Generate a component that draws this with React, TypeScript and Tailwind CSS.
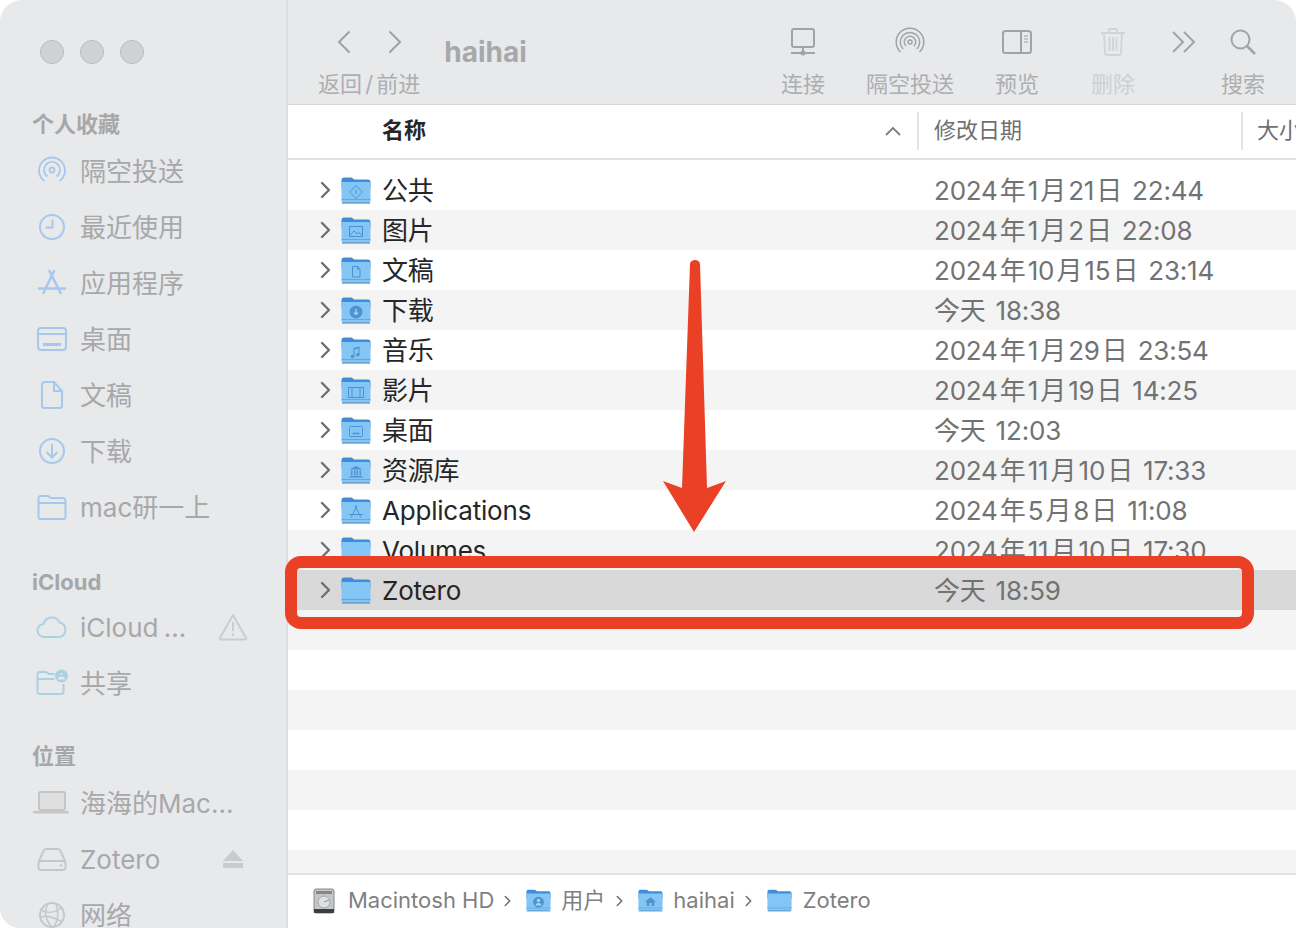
import React from 'react';

const fontStack = "font-['Inter','Noto_Sans_CJK_SC',sans-serif]";

type Glyph = 'public' | 'pictures' | 'doc' | 'download' | 'music' | 'movie' | 'desktop' | 'library' | 'apps' | 'user' | 'home' | 'none';

const FolderGlyph: React.FC<{ glyph: Glyph }> = ({ glyph }) => {
    const s = { stroke: '#4d93cf', strokeWidth: 1, fill: 'none' };
    switch (glyph) {
        case 'public':
            return <g {...s}><path d="M15 8.500l6.500 6.500-6.500 6.500-6.500-6.500z" /><path d="M16 13l-2 2 2 2" /></g>;
        case 'pictures':
            return <g {...s}><rect x="8.500" y="9.500" width="13" height="10" /><path d="M9 18l4-4 3 3 2-1.500 3 2.500" /></g>;
        case 'doc':
            return <g {...s}><path d="M11.500 9.500h5l2.500 2.500v8h-7.500z" /><path d="M16.500 9.500v2.500h2.500" /></g>;
        case 'download':
            return <g><circle cx="15" cy="15" r="6.500" fill="#4d93cf" /><path d="M15 12v5M13 15.500l2 2 2-2" stroke="#a8d8f8" strokeWidth="1.200" fill="none" /></g>;
        case 'music':
            return <g fill="#4d93cf"><path d="M12.500 11l6-1.500v8h-1V11.500l-4 1v7h-1z" /><circle cx="11.500" cy="19.500" r="1.700" /><circle cx="16.800" cy="17.800" r="1.700" /></g>;
        case 'movie':
            return <g {...s}><rect x="7.500" y="10.500" width="15" height="10" /><path d="M11 10.500v10M19 10.500v10" /></g>;
        case 'desktop':
            return <g {...s}><rect x="8.500" y="9.500" width="13" height="10" rx="1" /><path d="M11.500 16.500h7" strokeWidth="1.500" /></g>;
        case 'library':
            return <g fill="#4d93cf"><path d="M15 9l6.500 3.500h-13z" /><rect x="10" y="13.500" width="1.500" height="5" /><rect x="13" y="13.500" width="1.500" height="5" /><rect x="15.500" y="13.500" width="1.500" height="5" /><rect x="18.500" y="13.500" width="1.500" height="5" /><rect x="8.500" y="19" width="13" height="1.500" /></g>;
        case 'apps':
            return <g {...s}><path d="M14 8.500l6 12M16 8.500l-6 12M8 17.500h14" /></g>;
        case 'user':
            return <g><circle cx="15" cy="15.500" r="6.500" fill="#4d93cf" /><circle cx="15" cy="13.500" r="2" fill="#a8d8f8" /><path d="M11.500 19.500a3.500 3 0 0 1 7 0z" fill="#a8d8f8" /></g>;
        case 'home':
            return <g fill="#4d93cf"><path d="M15 9.500l6.500 5.500h-2v5h-3v-3.500h-3V20h-3v-5h-2z" /></g>;
        default:
            return null;
    }
};

const Folder: React.FC<{ glyph?: Glyph; className?: string }> = ({ glyph = 'none', className = 'w-[30px] h-[27px]' }) => (
    <svg viewBox="0 0 30 27" className={`shrink-0 ${className}`}>
        <path d="M0.500 3a2.500 2.500 0 0 1 2.500-2.500h7c1.500 0 2 1 3 2h14a2.500 2.500 0 0 1 2.500 2.500v6h-29z" fill="#3f8dd6" />
        <path d="M0.500 6.500c0-1 .8-1.500 1.500-1.500h26c.8 0 1.500.6 1.500 1.500V24a2 2 0 0 1-2 2h-25a2 2 0 0 1-2-2z" fill="#83c6f6" />
        <path d="M0.500 22.500h29" stroke="#5fa8e2" strokeWidth="1" />
        <path d="M1 26h28" stroke="#5d90bd" strokeWidth="1.200" />
        <FolderGlyph glyph={glyph} />
    </svg>
);

const Chevron: React.FC<{ className?: string }> = ({ className = 'w-[11px] h-[18px] text-[#6f6f6f]' }) => (
    <svg viewBox="0 0 11 18" className={`shrink-0 ${className}`} fill="none" stroke="currentColor" strokeWidth="2.400" strokeLinecap="round" strokeLinejoin="round">
        <path d="M2 2l7 7-7 7" />
    </svg>
);

// sidebar icons, all on a 32px box
const SideIcon: React.FC<{ name: string }> = ({ name }) => {
    const blue = { fill: 'none', stroke: '#a6c8ec', strokeWidth: 2 };
    const grey = { fill: 'none', stroke: '#c6c7c9', strokeWidth: 2 };
    const teal = { fill: 'none', stroke: '#a9d2e2', strokeWidth: 2 };
    let body: React.ReactNode = null;
    if (name === 'airdrop') {
        body = <g {...blue} strokeWidth="1.800"><circle cx="16" cy="15" r="2.500" /><path d="M11.400 21.500A8 8 0 1 1 20.600 21.500M8.500 26.100A13 13 0 1 1 23.500 26.100" /></g>;
    } else if (name === 'clock') {
        body = <g {...blue}><circle cx="16" cy="16" r="12" /><path d="M16.500 8.500v8h-7" /></g>;
    } else if (name === 'apps') {
        body = <g {...blue} strokeWidth="2.600" strokeLinecap="round"><path d="M13.500 4l11 22M18 4L7.500 26M3 21.500h26" /></g>;
    } else if (name === 'desktop') {
        body = <g {...blue}><rect x="2" y="5" width="28" height="22" rx="3" /><path d="M2 11h28" /><rect x="7" y="20" width="18" height="3" fill="#a6c8ec" stroke="none" /></g>;
    } else if (name === 'doc') {
        body = <g {...blue}><path d="M7 6a3 3 0 0 1 3-3h9l8 9v15a2 2 0 0 1-2 2H9a2 2 0 0 1-2-2z" transform="translate(-1 0)" /><path d="M18 3v9h8" /></g>;
    } else if (name === 'download') {
        body = <g {...blue}><circle cx="16" cy="16" r="12" /><path d="M16 9v13M10.500 17l5.500 5.500 5.500-5.500" /></g>;
    } else if (name === 'folder') {
        body = <g {...blue}><path d="M2.500 7a2 2 0 0 1 2-2h7c2 0 2 2 4 2h11a3 3 0 0 1 3 3v16a2 2 0 0 1-2 2h-23a2 2 0 0 1-2-2zM2.500 12h27" /></g>;
    } else if (name === 'cloud') {
        body = <g {...teal}><path d="M8.500 26a6.500 6.500 0 0 1-1-13 8.500 8.500 0 0 1 16-1.500 7.500 7.500 0 0 1 .5 14.500z" /></g>;
    } else if (name === 'shared') {
        body = <g {...teal}><path d="M1.500 7a2 2 0 0 1 2-2h6c2 0 2 2 4 2h5M1.500 12h17M1.500 7v18a2 2 0 0 0 2 2h22a2 2 0 0 0 2-2v-8" /><circle cx="25.500" cy="9" r="6.500" fill="#a9d2e2" stroke="none" /><circle cx="25.500" cy="7" r="2" fill="#e8e9eb" /><path d="M22 12.500a3.500 3 0 0 1 7 0z" fill="#e8e9eb" stroke="none" /></g>;
    } else if (name === 'laptop') {
        body = <g><rect x="5" y="5" width="26" height="18" rx="1.500" fill="#dfdfe0" stroke="#c4c5c7" strokeWidth="2" transform="translate(-2 0)" /><rect x="-3" y="24" width="36" height="2.500" rx="1" fill="#c4c5c7" /></g>;
    } else if (name === 'drive') {
        body = <g {...grey}><path d="M2.500 19l5-11a3 3 0 0 1 3-2h11a3 3 0 0 1 3 2l5 11M2.500 21a3 3 0 0 1 3-3h21a3 3 0 0 1 3 3v3a3 3 0 0 1-3 3h-21a3 3 0 0 1-3-3z" /><circle cx="25" cy="22.500" r="1.300" fill="#c6c7c9" stroke="none" /></g>;
    } else if (name === 'globe') {
        body = <g {...grey}><circle cx="16" cy="16" r="12" /><path d="M5 11c8 4 14 3 21-3M4 18c8-2 14 0 22 5M12 4.500c-4 8-3 16 4 23.500M20 5c3 8 2 16-2 23" strokeWidth="1.500" /></g>;
    }
    return <svg viewBox="0 0 32 32" className="w-[32px] h-[32px] shrink-0 overflow-visible">{body}</svg>;
};

const SideItem: React.FC<{ icon: string; label: string; trailing?: React.ReactNode }> = ({ icon, label, trailing }) => (
    <div className="h-[56px] flex items-center pl-[36px] pr-[40px]">
        <SideIcon name={icon} />
        <span className="ml-[12px] text-[26px] text-[#a7a8aa] whitespace-nowrap [word-spacing:-2px]">{label}</span>
        {trailing && <span className="ml-auto">{trailing}</span>}
    </div>
);

const SideHeader: React.FC<{ label: string; className?: string }> = ({ label, className }) => (
    <div className={`pl-[32px] text-[22px] leading-[30px] font-bold text-[#a6a7a9] ${className ?? ''}`}>{label}</div>
);

const Sidebar: React.FC = () => (
    <aside className="w-[288px] shrink-0 h-full bg-[#e8e9eb] border-r-2 border-[#dcdddf] rounded-bl-[20px] overflow-hidden">
        <div className="flex gap-[16px] pl-[40px] pt-[40px]">
            {[0, 1, 2].map(i => (
                <span key={i} className="w-[24px] h-[24px] rounded-full bg-[#d0d1d3] border border-[#b9babc]" />
            ))}
        </div>
        <SideHeader label="个人收藏" className="mt-[45px] mb-[4px]" />
        <SideItem icon="airdrop" label="隔空投送" />
        <SideItem icon="clock" label="最近使用" />
        <SideItem icon="apps" label="应用程序" />
        <SideItem icon="desktop" label="桌面" />
        <SideItem icon="doc" label="文稿" />
        <SideItem icon="download" label="下载" />
        <SideItem icon="folder" label="mac研一上" />
        <SideHeader label="iCloud" className="mt-[32px] mb-[2px]" />
        <SideItem
            icon="cloud"
            label="iCloud ..."
            trailing={
                <svg viewBox="0 0 30 28" className="w-[30px] h-[28px] block -mr-[2px]">
                    <path d="M15 2L28 25a1 1 0 0 1-1 1.500H3A1 1 0 0 1 2 25z" fill="none" stroke="#cbcccd" strokeWidth="2" strokeLinejoin="round" />
                    <path d="M15 9v9M15 20.500v2.500" stroke="#cbcccd" strokeWidth="2" />
                </svg>
            }
        />
        <SideItem icon="shared" label="共享" />
        <SideHeader label="位置" className="mt-[30px] mb-[4px]" />
        <SideItem icon="laptop" label="海海的Mac..." />
        <SideItem
            icon="drive"
            label="Zotero"
            trailing={
                <svg viewBox="0 0 20 20" className="w-[20px] h-[20px] block mr-[3px]">
                    <path d="M10 1l10 11H0z" fill="#cacbcd" />
                    <rect x="0" y="14" width="20" height="5" fill="#cacbcd" />
                </svg>
            }
        />
        <SideItem icon="globe" label="网络" />
    </aside>
);

const ToolItem: React.FC<{ label: string; light?: boolean; className?: string; children: React.ReactNode }> = ({ label, light, className, children }) => (
    <div className={`flex flex-col items-center ${className ?? ''}`}>
        <div className="h-[40px] flex items-center justify-center">{children}</div>
        <span className={`mt-[8px] text-[22px] leading-[28px] whitespace-nowrap ${light ? 'text-[#cfd0d2]' : 'text-[#adaeb0]'}`}>{label}</span>
    </div>
);

const Toolbar: React.FC = () => (
    <div className="h-[105px] bg-[#e8e9eb] border-b border-[#d4d5d7] flex pl-[30px] pt-[22px] shrink-0">
        <div className="flex flex-col">
            <div className="h-[40px] flex items-center pl-[19px] gap-[37px] text-[#a0a1a3]">
                <svg viewBox="0 0 14 24" className="w-[14px] h-[24px]" fill="none" stroke="currentColor" strokeWidth="2"><path d="M12.500 1.500L2 12l10.500 10.500" /></svg>
                <svg viewBox="0 0 14 24" className="w-[14px] h-[24px]" fill="none" stroke="currentColor" strokeWidth="2"><path d="M1.500 1.500L12 12 1.500 22.500" /></svg>
            </div>
            <span className="mt-[8px] text-[22px] leading-[28px] text-[#adaeb0] whitespace-nowrap [word-spacing:-3px]">返回 / 前进</span>
        </div>
        <div className="ml-[24px] mt-[8px] text-[28px] leading-[44px] font-bold text-[#a7a8aa]">haihai</div>
        <div className="flex ml-auto pr-[31px]">
            <ToolItem label="连接">
                <svg viewBox="0 0 26 28" className="w-[26px] h-[28px]" fill="none" stroke="#a2a3a5" strokeWidth="2">
                    <rect x="2" y="1" width="22" height="18" rx="2" /><path d="M13 19v5M1 25h24" /><circle cx="13" cy="25" r="1.500" fill="#a2a3a5" />
                </svg>
            </ToolItem>
            <ToolItem label="隔空投送" className="ml-[41px]">
                <svg viewBox="0 0 30 30" className="w-[30px] h-[30px]" fill="none" stroke="#a2a3a5" strokeWidth="1.500">
                    <circle cx="15" cy="15" r="2" /><path d="M11 19a5.700 5.700 0 1 1 8 0M8.200 22a9.700 9.700 0 1 1 13.600 0M5.500 25a13.800 13.800 0 1 1 19 0" />
                </svg>
            </ToolItem>
            <ToolItem label="预览" className="ml-[41px]">
                <svg viewBox="0 0 30 24" className="w-[30px] h-[24px]" fill="none" stroke="#a2a3a5" strokeWidth="2">
                    <rect x="1" y="1" width="28" height="22" rx="2.500" /><path d="M19 1v22" />
                    <path d="M22 6h4M22 9h4M22 12h4" strokeWidth="1.200" />
                </svg>
            </ToolItem>
            <ToolItem label="删除" light className="ml-[52px]">
                <svg viewBox="0 0 24 28" className="w-[24px] h-[28px]" fill="none" stroke="#d2d3d5" strokeWidth="1.800">
                    <path d="M0 5h24M8 5V2a1 1 0 0 1 1-1h6a1 1 0 0 1 1 1v3M3 5l1 20a2 2 0 0 0 2 2h12a2 2 0 0 0 2-2l1-20M8.500 9v14M12 9v14M15.500 9v14" />
                </svg>
            </ToolItem>
            <div className="h-[40px] flex items-center ml-[36px]">
                <svg viewBox="0 0 26 24" className="w-[26px] h-[24px]" fill="none" stroke="#a2a3a5" strokeWidth="2">
                    <path d="M2 2l10 10L2 22M13 2l10 10-10 10" />
                </svg>
            </div>
            <ToolItem label="搜索" className="ml-[24px]">
                <svg viewBox="0 0 26 26" className="w-[26px] h-[26px]" fill="none" stroke="#a2a3a5" strokeWidth="2">
                    <circle cx="10.500" cy="10.500" r="9" /><path d="M17 17l8 8" strokeWidth="2.500" />
                </svg>
            </ToolItem>
        </div>
    </div>
);

const ListHeader: React.FC = () => (
    <div className="h-[55px] bg-white border-b-2 border-[#e1e1e1] flex items-center shrink-0 text-[22px] pb-[2px]">
        <div className="w-[631px] shrink-0 h-[38px] border-r-2 border-[#e4e4e4] flex items-center pl-[94px] pr-[16px] justify-between">
            <span className="font-bold text-[#262626]">名称</span>
            <svg viewBox="0 0 16 10" className="w-[16px] h-[10px]" fill="none" stroke="#7d7d7d" strokeWidth="1.800"><path d="M1 9l7-7 7 7" /></svg>
        </div>
        <div className="w-[324px] shrink-0 h-[38px] border-r-2 border-[#e4e4e4] flex items-center pl-[15px] text-[#6f6f6f]">修改日期</div>
        <div className="pl-[14px] text-[#6f6f6f] whitespace-nowrap">大小</div>
    </div>
);

const rows: { name: string; day: string; time: string; glyph: Glyph }[] = [
    { name: '公共', day: '2024 年 1 月 21 日', time: '22:44', glyph: 'public' },
    { name: '图片', day: '2024 年 1 月 2 日', time: '22:08', glyph: 'pictures' },
    { name: '文稿', day: '2024 年 10 月 15 日', time: '23:14', glyph: 'doc' },
    { name: '下载', day: '今天', time: '18:38', glyph: 'download' },
    { name: '音乐', day: '2024 年 1 月 29 日', time: '23:54', glyph: 'music' },
    { name: '影片', day: '2024 年 1 月 19 日', time: '14:25', glyph: 'movie' },
    { name: '桌面', day: '今天', time: '12:03', glyph: 'desktop' },
    { name: '资源库', day: '2024 年 11 月 10 日', time: '17:33', glyph: 'library' },
    { name: 'Applications', day: '2024 年 5 月 8 日', time: '11:08', glyph: 'apps' },
    { name: 'Volumes', day: '2024 年 11 月 10 日', time: '17:30', glyph: 'none' },
    { name: 'Zotero', day: '今天', time: '18:59', glyph: 'none' },
];

const FileRow: React.FC<{ row: (typeof rows)[number]; index: number }> = ({ row, index }) => (
    <div className={`h-[40px] flex items-center text-[26px] tracking-[-0.2px] ${row.name === 'Zotero' ? 'bg-[#d9d9d9]' : index % 2 ? 'bg-[#f4f4f5]' : 'bg-white'}`}>
        <div className="w-[631px] shrink-0 flex items-center pl-[32px]">
            <Chevron />
            <span className="ml-[10px]"><Folder glyph={row.glyph} className="w-[30px] h-[27px] block" /></span>
            <span className="ml-[11px] text-[#262626] whitespace-nowrap">{row.name}</span>
        </div>
        <div className="pl-[15px] text-[#727272] whitespace-nowrap [word-spacing:-5px]">
            {row.day}
            <span className="ml-[10px]">{row.time}</span>
        </div>
    </div>
);

const PathBar: React.FC = () => (
    <div className="h-[55px] bg-white border-t-2 border-[#e1e1e1] flex items-center pl-[25px] text-[22px] text-[#7f7f7f] shrink-0 whitespace-nowrap pb-[2px]">
        <svg viewBox="0 0 22 26" className="w-[22px] h-[26px] shrink-0">
            <rect x="1" y="1" width="20" height="24" rx="2" fill="#c4c6c7" stroke="#85878a" />
            <rect x="3" y="3" width="16" height="3" fill="#85878a" />
            <circle cx="11" cy="14" r="6" fill="#dfe0e1" stroke="#a3a5a7" />
            <path d="M11 14l5-2" stroke="#8a8c8e" />
            <rect x="1" y="21" width="20" height="4" fill="#3c3e40" />
        </svg>
        <span className="ml-[13px]">Macintosh HD</span>
        <Chevron className="w-[7px] h-[12px] ml-[10px] text-[#6f6f6f]" />
        <span className="ml-[15px]"><Folder glyph="user" className="w-[25px] h-[23px] block" /></span>
        <span className="ml-[10px]">用户</span>
        <Chevron className="w-[7px] h-[12px] ml-[11px] text-[#6f6f6f]" />
        <span className="ml-[15px]"><Folder glyph="home" className="w-[25px] h-[23px] block" /></span>
        <span className="ml-[10px]">haihai</span>
        <Chevron className="w-[7px] h-[12px] ml-[10px] text-[#6f6f6f]" />
        <span className="ml-[15px]"><Folder className="w-[25px] h-[23px] block" /></span>
        <span className="ml-[11px]">Zotero</span>
    </div>
);

const App: React.FC = () => (
    <div className={`relative w-[1296px] h-[928px] overflow-hidden bg-white ${fontStack}`}>
        <div className="flex h-full rounded-t-[22px] overflow-hidden">
            <Sidebar />
            <main className="flex-1 min-w-0 flex flex-col">
                <Toolbar />
                <ListHeader />
                <div className="flex-1 min-h-0 overflow-hidden pt-[10px]">
                    {rows.map((row, i) => <FileRow key={row.name} row={row} index={i} />)}
                    {[11, 12, 13, 14, 15, 16, 17].map(i => (
                        <div key={i} className={`h-[40px] ${i % 2 ? 'bg-[#f4f4f5]' : 'bg-white'}`} />
                    ))}
                </div>
                <PathBar />
            </main>
        </div>

        {/* red annotation drawn over the list */}
        <div className="absolute left-[285px] top-[556px] w-[969px] h-[73px] border-[12px] border-[#ea4025] rounded-[16px]" />
        <svg viewBox="0 0 64 274" className="absolute left-[663px] top-[260px] w-[64px] h-[274px]">
            <path d="M27 4a5 4 0 0 1 10 0L44 228L63 221L31 272L0 221L19 228z" fill="#ea4025" />
        </svg>
    </div>
);

export default App;
